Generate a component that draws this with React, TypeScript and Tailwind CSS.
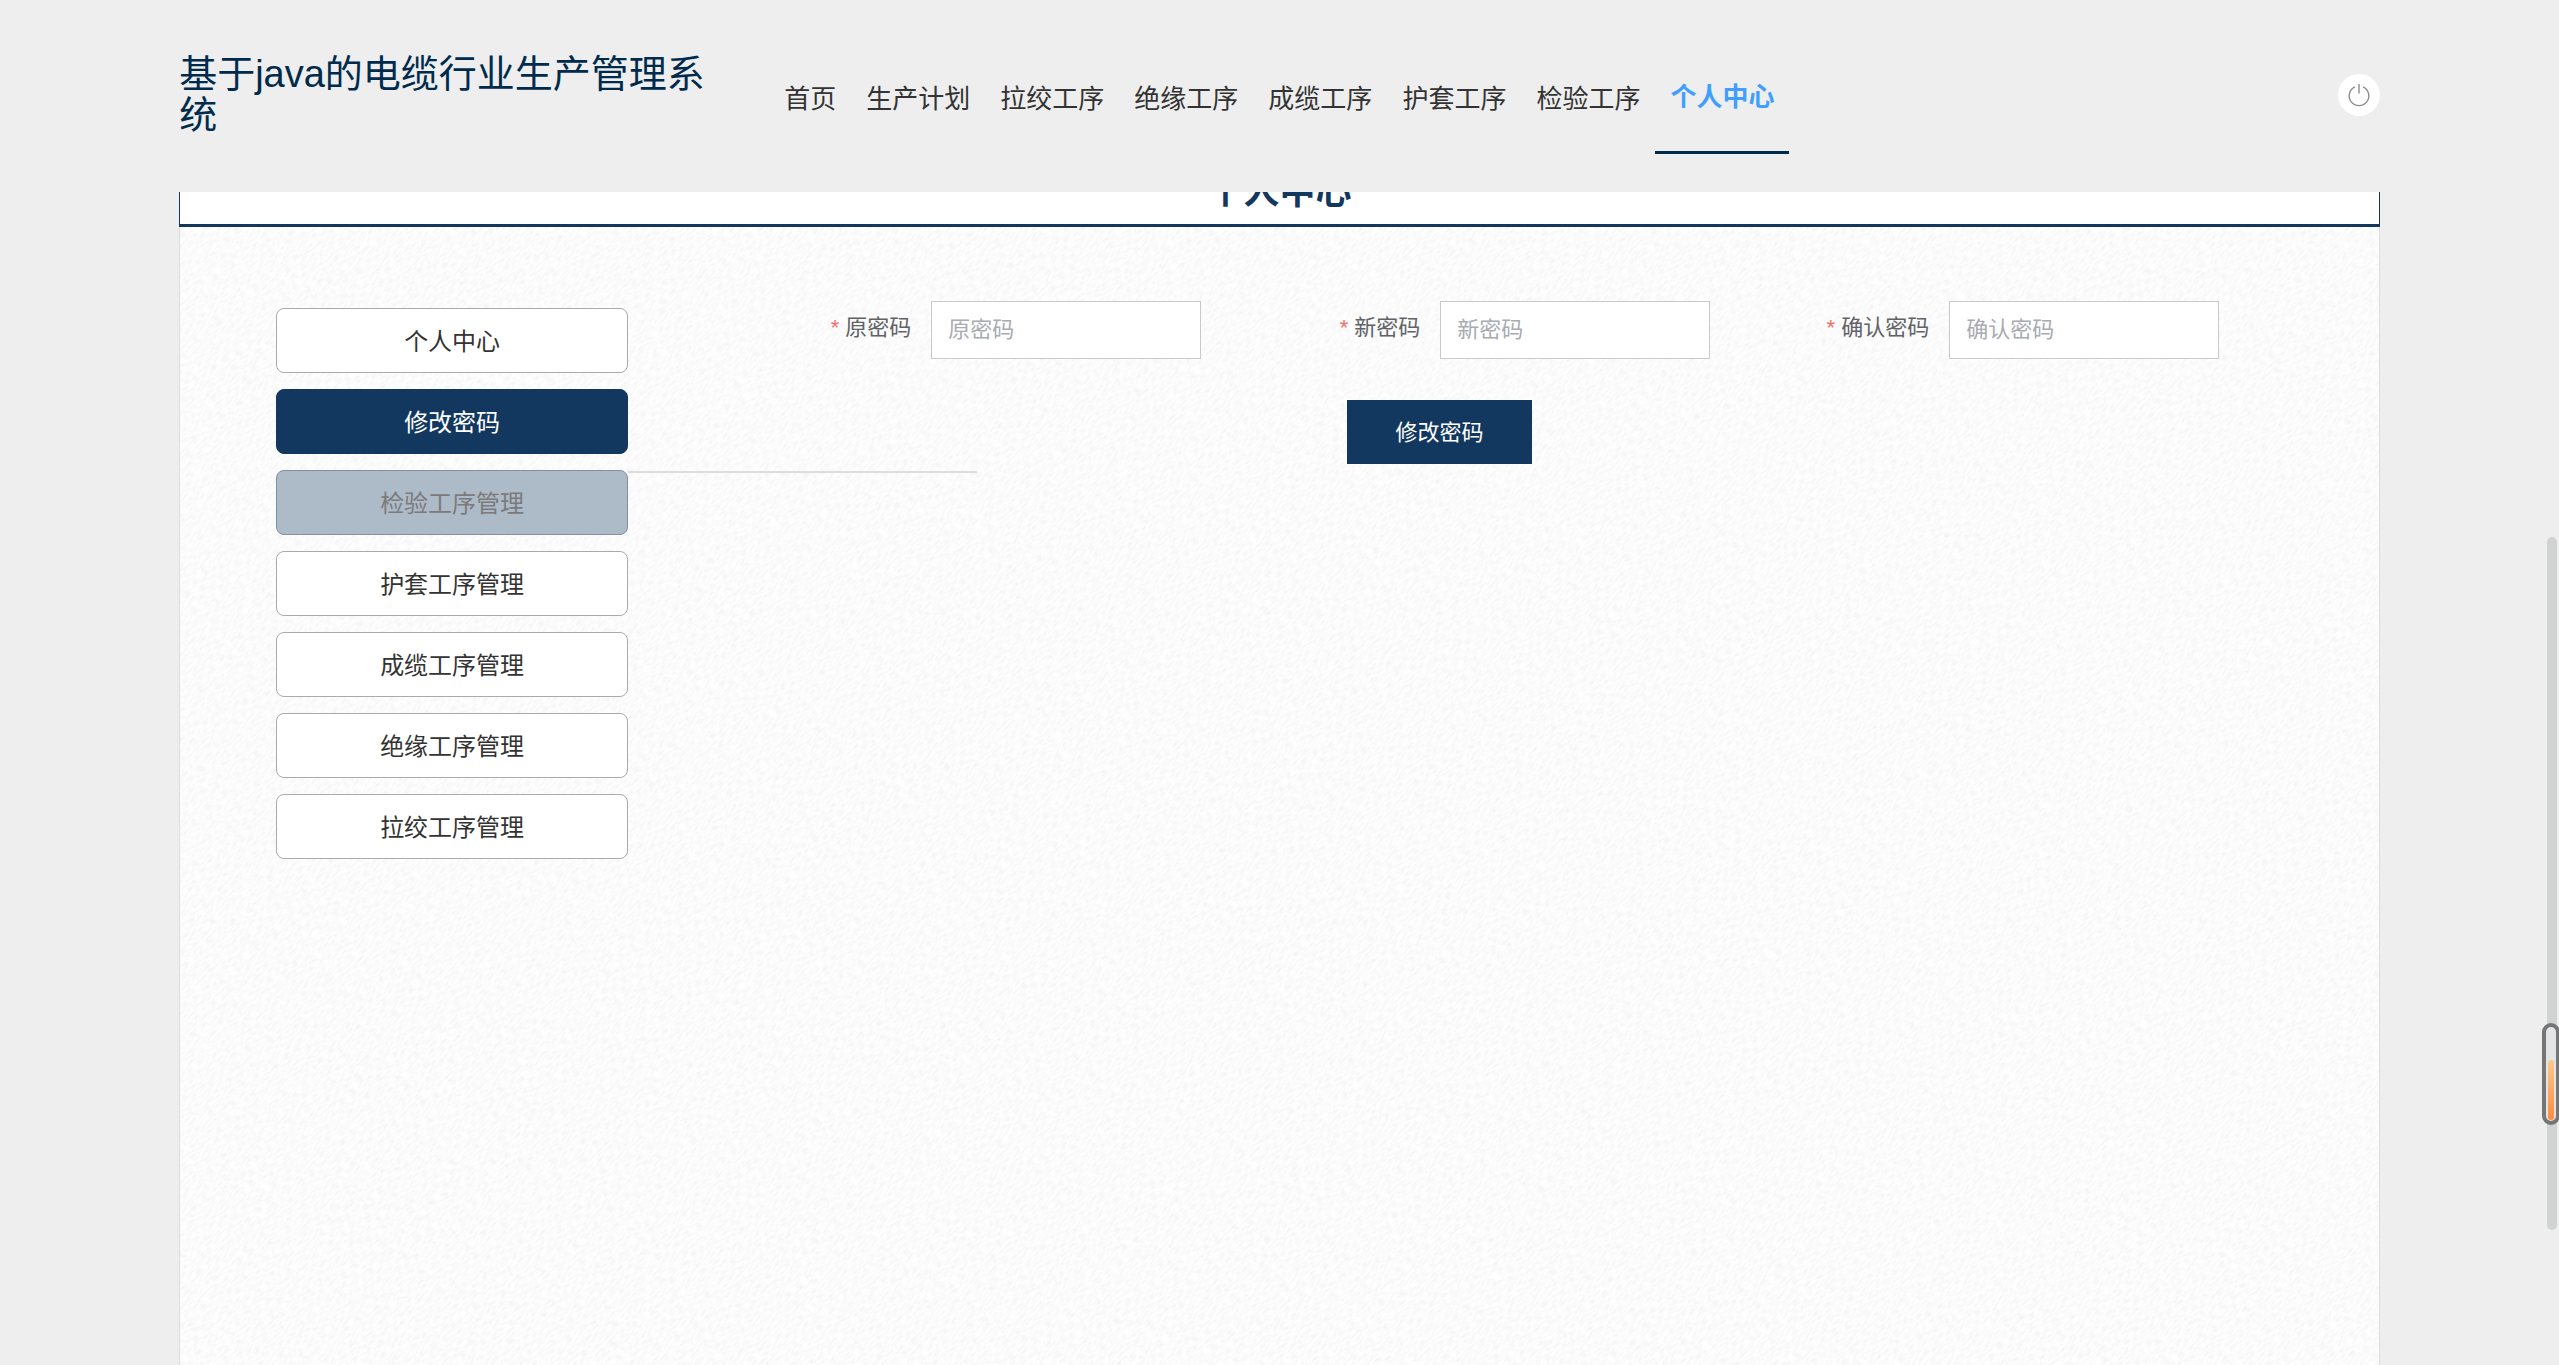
interface NavItem {
  label: string;
  active?: boolean;
}

interface PasswordField {
  id: string;
  label: string;
}

const navItems: NavItem[] = [
  { label: '首页' },
  { label: '生产计划' },
  { label: '拉绞工序' },
  { label: '绝缘工序' },
  { label: '成缆工序' },
  { label: '护套工序' },
  { label: '检验工序' },
  { label: '个人中心', active: true },
];

const menuItems = [
  '个人中心',
  '修改密码',
  '检验工序管理',
  '护套工序管理',
  '成缆工序管理',
  '绝缘工序管理',
  '拉绞工序管理',
];

const selectedMenu = '修改密码';
const hoveredMenu = '检验工序管理';

const fields: PasswordField[] = [
  { id: 'old-password', label: '原密码' },
  { id: 'new-password', label: '新密码' },
  { id: 'confirm-password', label: '确认密码' },
];

function menuClass(item: string) {
  const base = 'h-[65px] w-full rounded-lg border pt-0.5 text-2xl';
  if (item === selectedMenu) {
    return `${base} border-[#133860] bg-[#133860] text-white`;
  }
  if (item === hoveredMenu) {
    return `${base} border-[#8090a0] bg-[#adbac7] text-[#7b7b7b]`;
  }
  return `${base} border-[#aaa] bg-white text-[#333]`;
}

function PowerIcon() {
  return (
    <svg viewBox="0 0 24 24" className="size-6" fill="none" stroke="#8c8c8c" strokeWidth="1.4">
      <path d="M8 3.9a9.8 9.8 0 1 0 8 0" />
      <path d="M12 1v9.5" />
    </svg>
  );
}

function PaperTexture() {
  return (
    <svg className="absolute inset-0 h-full w-full" aria-hidden="true">
      <filter id="grain" x="0" y="0" width="100%" height="100%">
        <feTurbulence type="fractalNoise" baseFrequency="0.14 0.45" numOctaves="3" seed="4" />
        <feColorMatrix values="0 0 0 0 0.6  0 0 0 0 0.6  0 0 0 0 0.6  0.45 0 0 0 -0.17" />
      </filter>
      <g transform="rotate(-45)">
        <rect x="-1800" y="-200" width="4000" height="3200" filter="url(#grain)" />
      </g>
    </svg>
  );
}

function Header() {
  return (
    <header className="relative z-10 h-48 bg-[#eee] pb-0.5">
      <div className="mx-auto flex h-full w-[86%] items-center">
        <h1 className="w-1/4 text-[38px] leading-[41px] text-[#002b4d]">
          基于java的电缆行业生产管理系统
        </h1>
        <nav className="ml-10 flex pt-1.5">
          {navItems.map((item) => (
            <a
              key={item.label}
              href="#"
              className={`flex h-28 items-center px-[15px] pt-0.5 text-[26px] whitespace-nowrap ${
                item.active
                  ? 'border-b-[3px] border-[#002b4d] font-bold text-[#409eff]'
                  : 'text-[#333]'
              }`}
            >
              {item.label}
            </a>
          ))}
        </nav>
        <button
          type="button"
          aria-label="退出"
          className="ml-auto flex size-[42px] items-center justify-center rounded-full bg-white"
        >
          <PowerIcon />
        </button>
      </div>
    </header>
  );
}

function PasswordForm() {
  return (
    <form className="min-w-0 flex-1">
      <div className="grid grid-cols-3">
        {fields.map((field) => (
          <div key={field.id} className="flex items-start justify-end">
            <label
              htmlFor={field.id}
              className="pr-5 text-[22px] leading-[54px] whitespace-nowrap text-[#606266]"
            >
              <span className="mr-1.5 text-[#f56c6c]">*</span>
              {field.label}
            </label>
            <input
              id={field.id}
              type="password"
              placeholder={field.label}
              className="h-[58px] w-[53%] border border-[#c8c9cb] bg-white px-4 text-[22px] placeholder:text-[#a8abb2]"
            />
          </div>
        ))}
      </div>
      <div className="mt-[41px] flex justify-center pr-8">
        <button type="button" className="h-16 bg-[#133860] px-12 text-[22px] text-white">
          修改密码
        </button>
      </div>
    </form>
  );
}

function ScrollMarker() {
  return (
    <div className="fixed top-[537px] right-0.5 z-20 h-[693px] w-2.5 rounded-full bg-[#d1d3d3]">
      <div className="absolute top-[486px] -left-[5px] flex h-[102px] w-[18px] items-end justify-center rounded-full border-4 border-[#757575] bg-[#e3e4e5] p-px">
        <div className="h-[60px] w-1.5 rounded-full bg-linear-to-b from-[#f9c98c] to-[#ff8a3d]" />
      </div>
    </div>
  );
}

export default function App() {
  return (
    <div className="flex min-h-screen flex-col overflow-hidden bg-[#eee] font-['Liberation_Sans','Noto_Sans_CJK_SC',sans-serif]">
      <Header />
      <main className="mx-auto -mt-12 flex w-[86%] flex-1 flex-col">
        <h2 className="border-x border-b-[3px] border-[#133860] bg-white pt-6 pb-2 text-center text-4xl leading-[48px] font-bold text-[#133860]">
          个人中心
        </h2>
        <div className="relative flex flex-1 border-x border-[#ddd] bg-[#fefefe]">
          <PaperTexture />
          <div className="relative flex flex-1 items-start gap-16 pt-[74px] pr-40 pb-10 pl-24">
            <aside className="relative mt-[7px] w-[352px] shrink-0">
              <ul className="flex flex-col gap-4">
                {menuItems.map((item) => (
                  <li key={item}>
                    <button type="button" className={menuClass(item)}>
                      {item}
                    </button>
                  </li>
                ))}
              </ul>
              {/* empty submenu of the hovered entry */}
              <div className="absolute top-[163px] left-full h-0.5 w-[349px] bg-[#ddd]" />
            </aside>
            <PasswordForm />
          </div>
        </div>
      </main>
      <ScrollMarker />
    </div>
  );
}
